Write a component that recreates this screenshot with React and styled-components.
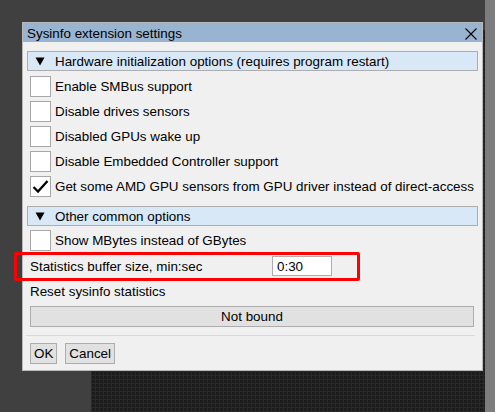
import React from 'react';
import styled, { createGlobalStyle } from 'styled-components';

const Global = createGlobalStyle`
  html, body { margin: 0; padding: 0; }
  body {
    background: #404040;
    font-family: "Liberation Sans", Arial, sans-serif;
    font-size: 13.4px;
    color: #000;
  }
`;

const Desktop = styled.div`
  position: relative;
  width: 495px;
  height: 412px;
  overflow: hidden;
  display: flex;
  background: #404040;
`;

const MainArea = styled.div`
  width: 485px;
  box-sizing: border-box;
  padding: 30px 0 0 91px;
  display: flex;
`;

const GridPanel = styled.div`
  flex: 1;
  background-color: #1c1c1c;
  background-image:
    repeating-linear-gradient(0deg, #292929 0 1px, transparent 1px 4px),
    repeating-linear-gradient(90deg, #292929 0 1px, transparent 1px 4px);
`;

const SideStrip = styled.div`
  width: 10px;
  background: #7d7d7d;
`;

const Dialog = styled.div`
  position: absolute;
  left: 22px;
  top: 22px;
  width: 461px;
  height: 349px;
  box-sizing: border-box;
  border: 1px solid #b9b9b9;
  background: #f0f0f0;
  display: flex;
  flex-direction: column;
`;

const TitleBar = styled.div`
  height: 19px;
  background: #99b4d1;
  display: flex;
  align-items: center;
  justify-content: space-between;
  padding: 0 4px 0 4px;
  flex-shrink: 0;
`;

const Title = styled.span`
  line-height: 19px;
  padding-top: 2px;
`;

const CloseBtn = styled.svg`
  width: 12px;
  height: 12px;
  margin-top: 2px;
  margin-right: 1px;
`;

const Body = styled.div`
  flex: 1;
  display: flex;
  flex-direction: column;
  padding: 9px 4px 0 4px;
`;

const GroupHeader = styled.div`
  height: 20px;
  box-sizing: border-box;
  border: 1px solid #adadad;
  background: #d9e8f6;
  display: flex;
  align-items: center;
  padding-left: 7px;
  gap: 10px;
  margin-top: ${p => p.$mt || 0}px;
  flex-shrink: 0;
`;

const Triangle = styled.svg`
  width: 10px;
  height: 9px;
`;

const CheckRow = styled.div`
  height: 25px;
  display: flex;
  align-items: center;
  padding-left: 3px;
  gap: 4px;
  margin-top: ${p => p.$mt || 0}px;
  flex-shrink: 0;
`;

const Box = styled.div`
  width: 21px;
  height: 21px;
  box-sizing: border-box;
  border: 1px solid #a8a8a8;
  background: #fff;
  display: flex;
  align-items: center;
  justify-content: center;
`;

const FieldRow = styled.div`
  position: relative;
  height: 26px;
  display: flex;
  align-items: center;
  padding-left: 3px;
  flex-shrink: 0;
  &::after {
    content: "";
    position: absolute;
    left: -13px;
    top: -1px;
    width: 346px;
    height: 29px;
    box-sizing: border-box;
    border: 3px solid #ff0000;
    border-radius: 2px;
    pointer-events: none;
  }
`;

const FieldLabel = styled.span`
  width: 242px;
`;

const TextInput = styled.div`
  width: 60px;
  height: 20px;
  box-sizing: border-box;
  border: 1px solid #adadad;
  background: #fff;
  display: flex;
  align-items: center;
  padding-left: 4px;
`;

const PlainLabel = styled.div`
  height: 25px;
  display: flex;
  align-items: center;
  padding-left: 3px;
  flex-shrink: 0;
`;

const WideButton = styled.div`
  height: 21px;
  box-sizing: border-box;
  margin: 2px 4px 0 3px;
  border: 1px solid #adadad;
  background: #e1e1e1;
  display: flex;
  align-items: center;
  justify-content: center;
  flex-shrink: 0;
`;

const Separator = styled.div`
  height: 1px;
  background: #d9d9d9;
  margin: 8px 3px 0 -1px;
  flex-shrink: 0;
`;

const Footer = styled.div`
  display: flex;
  gap: 8px;
  padding-left: 3px;
  margin-top: 7px;
`;

const Button = styled.div`
  height: 21px;
  box-sizing: border-box;
  border: 1px solid #adadad;
  background: #e1e1e1;
  display: flex;
  align-items: center;
  padding: 0 3px;
`;

const Check = () => (
  <svg width="19" height="19" viewBox="0 0 19 19">
    <path d="M2.5 10 L7 14.5 L16.5 4" fill="none" stroke="#000" strokeWidth="2.3" />
  </svg>
);

const Option = ({ label, checked, mt }) => (
  <CheckRow $mt={mt}>
    <Box>{checked && <Check />}</Box>
    <span>{label}</span>
  </CheckRow>
);

const Header = ({ children, mt }) => (
  <GroupHeader $mt={mt}>
    <Triangle viewBox="0 0 10 9">
      <path d="M0.5 0.5 L9.5 0.5 L5 8.5 Z" fill="#000" />
    </Triangle>
    <span>{children}</span>
  </GroupHeader>
);

export default function App() {
  return (
    <>
      <Global />
      <Desktop>
        <MainArea>
          <GridPanel />
        </MainArea>
        <SideStrip />
        <Dialog>
          <TitleBar>
            <Title>Sysinfo extension settings</Title>
            <CloseBtn viewBox="0 0 12 12">
              <path d="M0.5 0.5 L11.5 11.5 M11.5 0.5 L0.5 11.5" stroke="#000" strokeWidth="1.1" />
            </CloseBtn>
          </TitleBar>
          <Body>
            <Header>Hardware initialization options (requires program restart)</Header>
            <Option mt={3} label="Enable SMBus support" />
            <Option label="Disable drives sensors" />
            <Option label="Disabled GPUs wake up" />
            <Option label="Disable Embedded Controller support" />
            <Option checked label="Get some AMD GPU sensors from GPU driver instead of direct-access" />
            <Header mt={7}>Other common options</Header>
            <Option mt={2} label="Show MBytes instead of GBytes" />
            <FieldRow>
              <FieldLabel>Statistics buffer size, min:sec</FieldLabel>
              <TextInput>0:30</TextInput>
            </FieldRow>
            <PlainLabel>Reset sysinfo statistics</PlainLabel>
            <WideButton>Not bound</WideButton>
            <Separator />
            <Footer>
              <Button>OK</Button>
              <Button>Cancel</Button>
            </Footer>
          </Body>
        </Dialog>
      </Desktop>
    </>
  );
}
